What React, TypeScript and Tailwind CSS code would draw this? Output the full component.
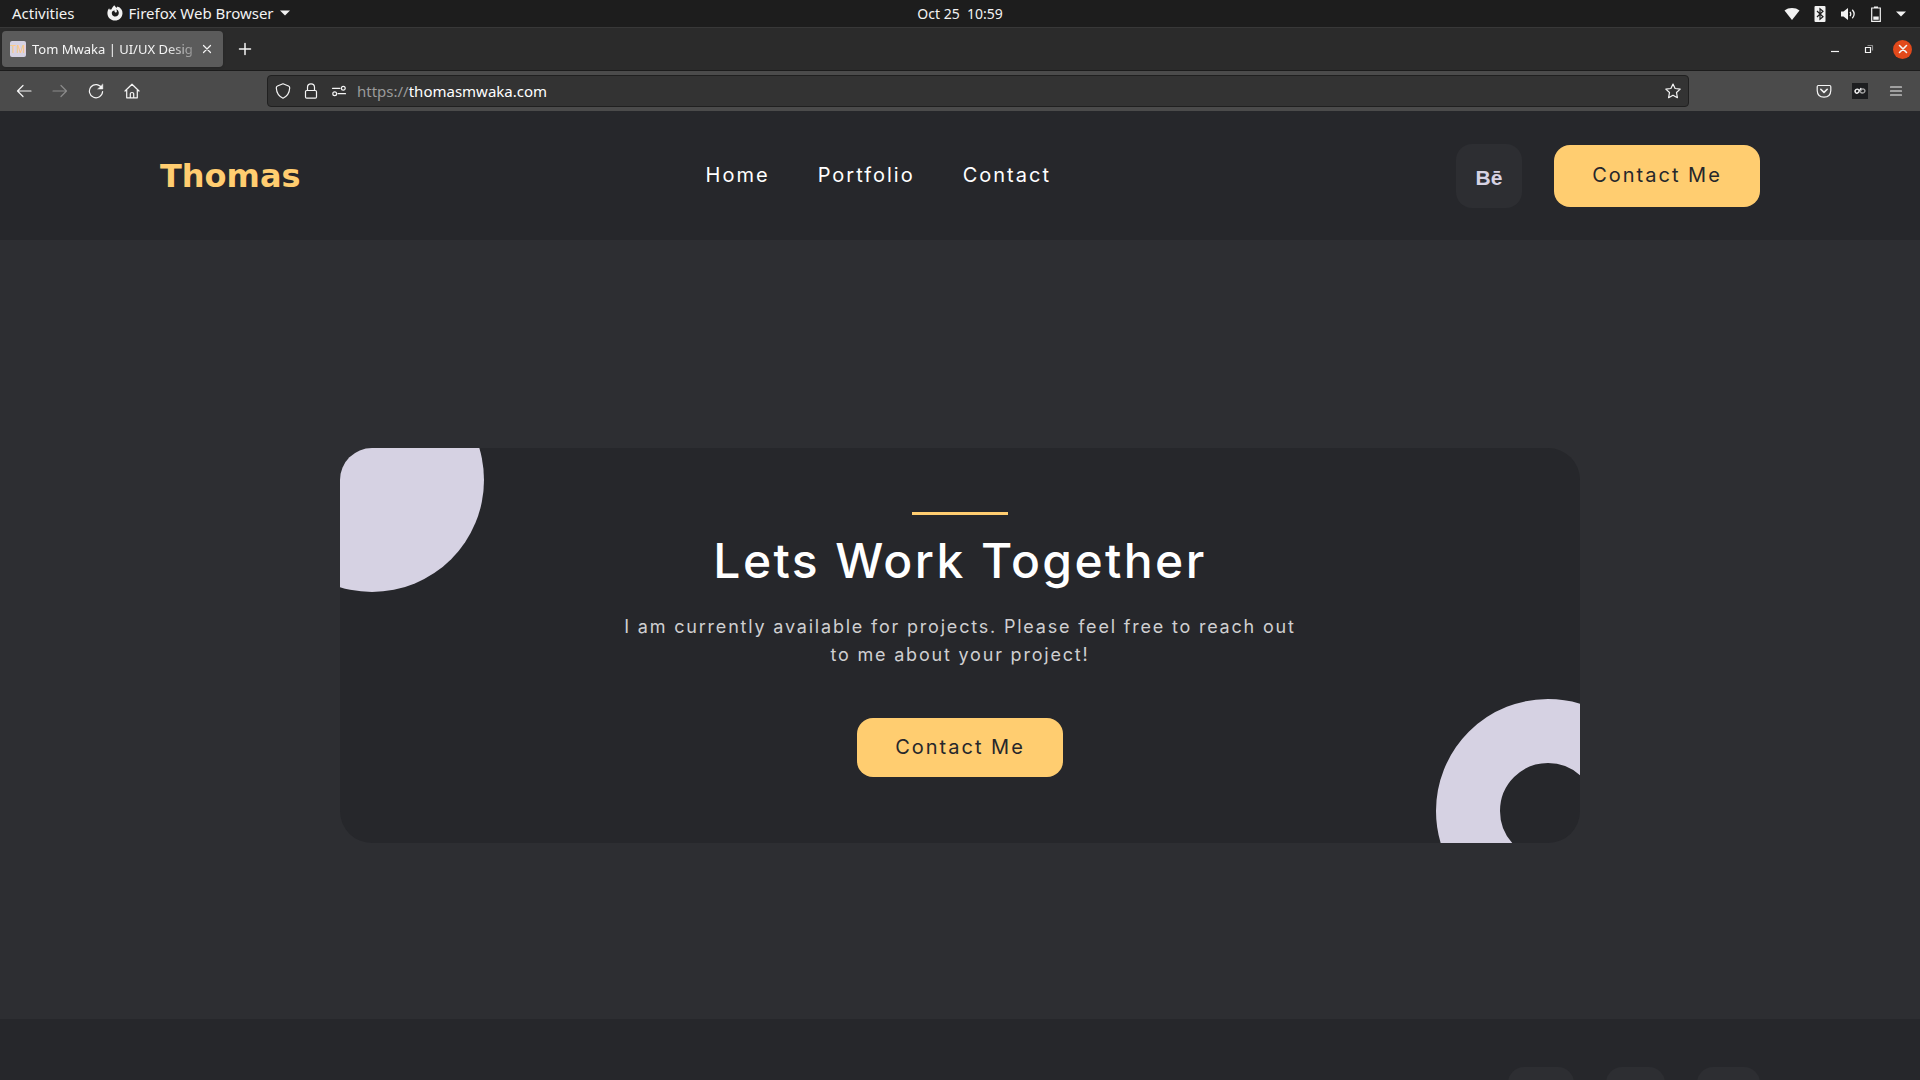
import React from "react";

type IconProps = { children: React.ReactNode; className?: string };

function Icon({ children, className = "" }: IconProps) {
  return (
    <svg
      viewBox="0 0 16 16"
      className={`size-4 shrink-0 ${className}`}
      fill="none"
      stroke="currentColor"
      strokeWidth="1.2"
      strokeLinecap="round"
      strokeLinejoin="round"
      aria-hidden="true"
    >
      {children}
    </svg>
  );
}

function SystemBar() {
  return (
    <div className="grid h-7 shrink-0 grid-cols-3 items-center border-b border-[#383838] bg-[#1d1d1d] px-3 text-sm text-[#f2f2f2]">
      <div className="flex items-center gap-8 text-[15px]">
        <button type="button">Activities</button>
        <button type="button" className="flex items-center gap-1.5">
          <svg viewBox="0 0 16 16" className="size-4" fill="currentColor" aria-hidden="true">
            <path d="M7.2 0.2 L9.3 2.8 C10.3 2.6 10.3 1.6 10.3 1.6 C14 2.8 15.6 5.2 15.5 8.3 C15.3 12.7 12 15.6 8 15.6 C3.800 15.6 0.500 12.500 0.400 8.300 C0.350 6.300 1 4.400 2.200 3.200 L2.500 4.600 L4.300 4.400 C5 3 6 1.500 7.200 0.200 Z M7.400 5.200 L5.200 6.400 C4.100 8.600 5.500 11.500 8.200 11.500 C10.400 11.500 11.900 9.800 11.800 7.700 C11.700 5.700 10.400 4.500 9 4.200 C10 5.200 10.200 6.500 9.500 7.300 C8.800 8 7.200 7.400 7.400 5.200 Z" fillRule="evenodd" />
          </svg>
          Firefox Web Browser
          <svg viewBox="0 0 10 6" className="h-1.5 w-2.5" fill="currentColor" aria-hidden="true">
            <path d="M0 0.500 H10 L5 5.500 Z" />
          </svg>
        </button>
      </div>
      <button type="button" className="justify-self-center">
        Oct 25&nbsp; 10:59
      </button>
      <div className="flex items-center gap-3 justify-self-end">
        <svg viewBox="0 0 16 16" className="size-4" fill="currentColor" aria-label="Wi-Fi">
          <path d="M0.500 4.500 C4.500 1.200 11.500 1.200 15.500 4.500 L8 14 Z" />
        </svg>
        <svg viewBox="0 0 16 16" className="size-4" aria-label="Bluetooth">
          <rect x="2.500" y="0" width="11" height="16" rx="1" fill="currentColor" />
          <path d="M5 5 L11 10.700 L8 13.300 V2.700 L11 5.300 L5 11" fill="none" stroke="#1d1d1d" strokeWidth="1.200" />
        </svg>
        <svg viewBox="0 0 16 16" className="size-4" aria-label="Volume">
          <path d="M1 5.500 H3.500 L8 2 V14 L3.500 10.500 H1 Z" fill="currentColor" />
          <path d="M10 5.800 Q11.500 8 10 10.200 M12.300 3.800 Q16 8 12.300 12.200" fill="none" stroke="currentColor" strokeWidth="1.300" />
        </svg>
        <svg viewBox="0 0 16 16" className="size-4" aria-label="Battery">
          <path d="M3.700 2 H12.300 V15.300 H3.700 Z" fill="none" stroke="currentColor" strokeWidth="1.200" />
          <path d="M6 0.500 H10 V2 H6 Z M5.300 10.500 H10.700 V13.700 H5.300 Z" fill="currentColor" />
        </svg>
        <svg viewBox="0 0 10 6" className="mr-0.5 h-1.5 w-2.5" fill="currentColor" aria-label="System menu">
          <path d="M0 0.500 H10 L5 5.500 Z" />
        </svg>
      </div>
    </div>
  );
}

function TabStrip() {
  return (
    <div className="flex h-[43px] shrink-0 items-center border-b border-[#1c1c1c] bg-[#2b2b2b] pr-2 pl-0.5 text-sm text-[#f5f5f5]">
      <div className="flex h-9 w-[221px] items-center rounded bg-[#5b5b5b] pr-2 pl-2 shadow">
        <span className="mr-1.5 grid size-4 shrink-0 place-items-center rounded-[2px] bg-[#d6d2e3] text-[10px] leading-none font-medium text-[#fdc989]">
          TM
        </span>
        <span className="flex-1 text-[13px] whitespace-nowrap [mask-image:linear-gradient(to_right,black_80%,transparent_105%)]">
          Tom Mwaka | UI/UX Desig
        </span>
        <button type="button" aria-label="Close tab">
          <Icon><path d="M4.500 4.500 L11.500 11.500 M11.500 4.500 L4.500 11.500" /></Icon>
        </button>
      </div>
      <button type="button" aria-label="New tab" className="ml-3.5">
        <Icon><path d="M8 2.500 V13.500 M2.500 8 H13.500" strokeWidth="1.500" /></Icon>
      </button>
      <div className="ml-auto flex items-center gap-4">
        <button type="button" aria-label="Minimize">
          <Icon><path d="M4 10.500 H12" strokeLinecap="butt" /></Icon>
        </button>
        <button type="button" aria-label="Restore" className="ml-0.5">
          <Icon>
            <path d="M6.500 4.500 H11.500 V9.500" stroke="#8a8a8a" strokeLinecap="butt" />
            <path d="M4.500 6.500 H9.500 V11.500 H4.500 Z" strokeLinejoin="miter" />
          </Icon>
        </button>
        <button type="button" aria-label="Close window" className="grid size-[19px] place-items-center rounded-full bg-[#e2491b]">
          <Icon><path d="M4.500 4.500 L11.500 11.500 M11.500 4.500 L4.500 11.500" strokeWidth="1.600" /></Icon>
        </button>
      </div>
    </div>
  );
}

function Toolbar() {
  return (
    <div className="flex h-10 shrink-0 items-center bg-[#4b4b4b] pr-4 pl-4 text-[#f5f5f5]">
      <div className="mr-[127px] flex gap-5">
        <button type="button" aria-label="Back">
          <Icon><path d="M15 8 H1.500 M7 2.500 L1.500 8 L7 13.500" /></Icon>
        </button>
        <button type="button" aria-label="Forward" className="text-[#8b8b8b]">
          <Icon><path d="M1 8 H14.500 M9 2.500 L14.500 8 L9 13.500" /></Icon>
        </button>
        <button type="button" aria-label="Reload">
          <Icon>
            <path d="M13.800 5 A6.600 6.600 0 1 0 14.600 8.500" />
            <path d="M14.800 1.300 V6 H10 Z" fill="currentColor" strokeWidth="0.500" />
          </Icon>
        </button>
        <button type="button" aria-label="Home">
          <Icon><path d="M1 8 L8 1.200 L15 8 M2.700 7 V14.800 H13.300 V7 M6.300 14.500 V10.800 Q6.300 9.500 8 9.500 Q9.700 9.500 9.700 10.800 V14.500" /></Icon>
        </button>
      </div>
      <div className="flex h-8 flex-1 items-center gap-3 rounded border border-[#202020] bg-[#333333] px-[7px]">
        <Icon><path d="M8 0.800 L13.500 3 Q14.800 3.500 14.700 5 Q14.300 12.300 8 15.200 Q1.700 12.300 1.300 5 Q1.200 3.500 2.500 3 Z" /></Icon>
        <Icon><path d="M3.700 7.500 H12.300 Q13.500 7.500 13.500 8.700 V14 Q13.500 15.200 12.300 15.200 H3.700 Q2.500 15.200 2.500 14 V8.700 Q2.500 7.500 3.700 7.500 Z M4.500 7.500 V4.300 A3.500 3.500 0 0 1 11.500 4.300 V7.500" /></Icon>
        <Icon>
          <path d="M1.500 5.300 H9 M7 10.700 H14.500" />
          <circle cx="12.300" cy="5.300" r="1.900" />
          <circle cx="3.700" cy="10.700" r="1.900" />
        </Icon>
        <a href="https://thomasmwaka.com" className="-ml-0.5 flex-1 text-[15px] text-white">
          <span className="text-[#9a9a9a]">https://</span>thomasmwaka.com
        </a>
        <button type="button" aria-label="Bookmark this page">
          <Icon><path d="M8 1 L10.100 5.500 L15.200 6.100 L11.500 9.500 L12.400 14.700 L8 12.200 L3.600 14.700 L4.500 9.500 L0.800 6.100 L5.900 5.500 Z" /></Icon>
        </button>
      </div>
      <div className="ml-[127px] flex gap-5">
        <button type="button" aria-label="Save to Pocket">
          <Icon>
            <path d="M2.300 2.500 H13.700 Q14.800 2.500 14.800 3.700 V7.500 Q14.500 14.200 8 14.200 Q1.500 14.200 1.200 7.500 V3.700 Q1.200 2.500 2.300 2.500 Z" />
            <path d="M4.800 6.300 L8 9.400 L11.200 6.300" strokeWidth="1.600" />
          </Icon>
        </button>
        <button type="button" aria-label="Extension" className="bg-[#1d1e20]">
          <Icon>
            <path d="M9 5.500 L6.500 9.300 Q5 11 3.500 9.500 Q2.300 7.800 4 6.500 Q5.500 5.500 7 7.300" strokeWidth="1.400" />
            <path d="M8 8.500 Q10 11 12 9.500 Q13.700 8 12.300 6.500 Q10.800 5 9.300 7" stroke="#a5a5a5" strokeWidth="1.400" />
          </Icon>
        </button>
        <button type="button" aria-label="Open menu">
          <Icon><path d="M2.500 4 H13.500 M2.500 8 H13.500 M2.500 12 H13.500" /></Icon>
        </button>
      </div>
    </div>
  );
}

function ContactButton({ className = "" }: { className?: string }) {
  return (
    <button
      type="button"
      className={`w-[206px] rounded-2xl bg-[#ffcd70] pb-0.5 text-center text-xl tracking-widest text-[#26272b] ${className}`}
    >
      Contact Me
    </button>
  );
}

function SiteHeader() {
  return (
    <header className="flex h-[129px] shrink-0 items-center justify-between bg-[#26272b] px-40">
      <a href="#home" className="font-['DejaVu_Sans',sans-serif] text-[32px] leading-10 font-bold text-[#ffcd70]">
        Thomas
      </a>
      <nav className="flex gap-12 pb-0.5 text-xl tracking-widest text-white">
        <a href="#home">Home</a>
        <a href="#portfolio">Portfolio</a>
        <a href="#contact">Contact</a>
      </nav>
      <div className="flex items-center gap-8">
        <a
          href="#behance"
          aria-label="Behance"
          className="grid h-16 w-[66px] place-items-center rounded-2xl bg-[#2d2e32] pt-1 font-['Liberation_Sans',sans-serif] text-[21px] font-bold text-[#d6d2e3]"
        >
          Bē
        </a>
        <ContactButton className="h-[62px]" />
      </div>
    </header>
  );
}

function Hero() {
  return (
    <main className="shrink-0 bg-[#2d2e32] px-40 pt-52 pb-44">
      <section className="relative mx-auto flex max-w-[1240px] flex-col items-center overflow-hidden rounded-[32px] bg-[#26272b] pt-16 pb-[66px] text-center">
        <div className="absolute -top-20 -left-20 size-56 rounded-full bg-[#d6d2e3]" />
        <div className="absolute -right-20 -bottom-20 size-56 rounded-full border-[64px] border-[#d6d2e3]" />
        <div className="h-[3px] w-24 bg-[#ffcd70]" />
        <h1 className="mt-2.5 text-5xl leading-[72px] font-medium tracking-wider text-white">Lets Work Together</h1>
        <p className="mt-4 max-w-[688px] text-lg leading-7 tracking-widest text-[#cfcfd1]">
          I am currently available for projects. Please feel free to reach out to me about your project!
        </p>
        <ContactButton className="mt-[49px] h-[59px]" />
      </section>
    </main>
  );
}

function SiteFooter() {
  return (
    <footer className="flex shrink-0 justify-end gap-8 bg-[#26272b] px-40 py-12">
      <a href="#behance" aria-label="Behance profile" className="h-16 w-[66px] rounded-2xl bg-[#2d2e32]" />
      <a href="#linkedin" aria-label="LinkedIn profile" className="h-16 w-[59px] rounded-2xl bg-[#2d2e32]" />
      <a href="#twitter" aria-label="Twitter profile" className="h-16 w-[63px] rounded-2xl bg-[#2d2e32]" />
    </footer>
  );
}

export default function App() {
  return (
    <div className="flex h-screen flex-col overflow-hidden font-['Noto_Sans',sans-serif]">
      <SystemBar />
      <TabStrip />
      <Toolbar />
      <div className="min-h-0 flex-1 overflow-hidden bg-[#26272b] font-['Inter',sans-serif]">
        <SiteHeader />
        <Hero />
        <SiteFooter />
      </div>
    </div>
  );
}
